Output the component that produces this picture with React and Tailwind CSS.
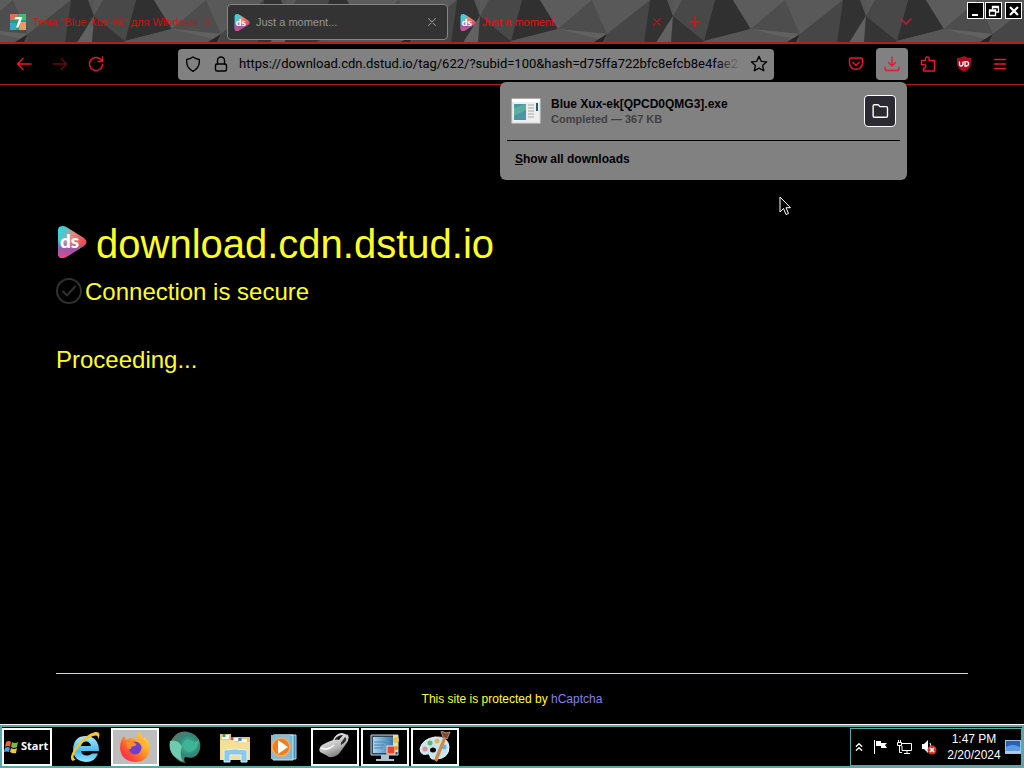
import React from "react";

function Facets() {
  return (
    <svg className="absolute inset-0 h-full w-full" aria-hidden="true">
      <defs>
        <pattern id="facets" x="94" y="0" width="193" height="43" patternUnits="userSpaceOnUse">
          <rect width="193" height="43" fill="#505050" />
          <path d="M0 0H9L0 16Z" fill="#595959" />
          <path d="M9 0H42L31 41L0 16Z" fill="#484848" />
          <path d="M42 0H60L78 29L31 41Z" fill="#303030" />
          <path d="M0 16L31 41L30 43H0Z" fill="#353535" />
          <path d="M60 0H112L78 29Z" fill="#5c5c5c" />
          <path d="M78 29L112 0L127 34Z" fill="#4d4d4d" />
          <path d="M112 0H170L127 34Z" fill="#595959" />
          <path d="M127 34L170 0L165 43H125Z" fill="#464646" />
          <path d="M170 0H188L193 16L176 43H164Z" fill="#323232" />
          <path d="M187 0H193V16Z" fill="#555" />
          <path d="M193 16L191 43H176Z" fill="#616161" />
          <path d="M193 16V43H191Z" fill="#353535" />
          <path d="M31 41L78 29L127 34L114 43H30Z" fill="#565656" />
          <path d="M78 29L127 34L120 39Z" fill="#616161" />
          <path d="M127 34L114 42H123Z" fill="#262626" />
        </pattern>
      </defs>
      <rect width="100%" height="100%" fill="url(#facets)" />
    </svg>
  );
}

function DsLogo({ className, id }) {
  const shape = "M1 4Q1 0 6 0Q8 0 11 2L27 12Q32 16 27 20L9 31Q1 34 1 27Z";
  return (
    <svg viewBox="0 0 30 32" className={className} aria-hidden="true">
      <defs>
        <linearGradient id={id} x1="0" y1="0" x2="0.9" y2="0.5">
          <stop offset="0" stopColor="#1fe0e6" />
          <stop offset="0.3" stopColor="#58c4cc" />
          <stop offset="0.55" stopColor="#e58a80" />
          <stop offset="1" stopColor="#ea5058" />
        </linearGradient>
        <linearGradient id={id + "b"} x1="0.3" y1="0" x2="0.2" y2="1">
          <stop offset="0.45" stopColor="#7a58c0" stopOpacity="0" />
          <stop offset="0.72" stopColor="#8c50b4" stopOpacity="0.85" />
          <stop offset="1" stopColor="#f0468c" />
        </linearGradient>
      </defs>
      <path d={shape} fill={`url(#${id})`} />
      <path d={shape} fill={`url(#${id}b)`} />
      <text x="3" y="22" fontFamily="Lato, sans-serif" fontWeight="900" fontSize="19" fill="#fff">ds</text>
    </svg>
  );
}

function Line({ children, className, w = 1.4, box = 16 }) {
  return (
    <svg viewBox={`0 0 ${box} ${box}`} className={className} fill="none" stroke="currentColor" strokeWidth={w} strokeLinecap="round" strokeLinejoin="round" aria-hidden="true">
      {children}
    </svg>
  );
}

function Close({ className }) {
  return <Line className={className} w={1.2}><path d="M4 4L12 12M12 4L4 12" /></Line>;
}

function WindowButton({ label, children }) {
  return (
    <button aria-label={label} className="flex h-[17px] w-[17px] items-center justify-center border border-white bg-black text-white">
      <svg viewBox="0 0 14 14" className="h-3.5 w-3.5 shrink-0" fill="none" stroke="currentColor" strokeWidth="1.6" aria-hidden="true">{children}</svg>
    </button>
  );
}

function TabStrip() {
  return (
    <header className="relative flex h-11 border-b-2 border-[#a82424] bg-[#525252]">
      <Facets />
      <div className="relative flex min-w-0 flex-1 pt-1 text-[11px] text-[#e01010]">
        <div className="flex h-9 w-56 items-center pl-2.5">
          <svg viewBox="0 0 16 16" className="h-4 w-4 shrink-0" aria-hidden="true">
            <rect width="16" height="16" rx="1" fill="#279e84" />
            <path d="M0 0H8V6H0Z" fill="#e36b50" /><path d="M0 9H6V16H0Z" fill="#38a9c4" /><path d="M10 8H16V16H9Z" fill="#e99a68" /><path d="M9 0H16V6H9Z" fill="#45b978" />
            <path d="M5 3H12L11.700 5L8.500 13.500H6L9 5.300H4.600Z" fill="#fff" />
          </svg>
          <button className="ml-1.5 w-[168px] whitespace-nowrap bg-linear-to-r from-[#e01010] from-80% to-[#b01010]/50 bg-clip-text text-left text-transparent">Тема "Blue Xux-ek" для Windows</button>
          <button aria-label="Close tab"><Close className="h-3.5 w-3.5 opacity-60" /></button>
        </div>
        <div className="ml-[3px] flex h-9 w-[221px] items-center rounded-sm border border-[#858585] bg-[#333] px-1.5 text-[#969696]">
          <DsLogo id="ds1" className="h-[17px] w-4 shrink-0" />
          <button className="ml-1.5 flex-1 text-left">Just a moment...</button>
          <button aria-label="Close tab" className="mr-0.5"><Close className="h-3.5 w-3.5" /></button>
        </div>
        <div className="flex h-9 w-56 items-center pl-3 pr-2">
          <DsLogo id="ds2" className="h-[17px] w-4 shrink-0" />
          <button className="ml-1.5 flex-1 text-left">Just a moment</button>
          <button aria-label="Close tab"><Close className="h-3.5 w-3.5" /></button>
        </div>
        <button aria-label="New tab" className="ml-[15px] h-9"><Line className="h-4 w-4" w={1.5}><path d="M8 3V13M3 8H13" /></Line></button>
      </div>
      <button aria-label="List all tabs" className="relative mr-[53px] text-[#d8142c]"><Line className="h-4 w-4"><path d="M3 6L8 11L13 6" /></Line></button>
      <div className="relative flex pt-0.5 pr-0.5">
        <WindowButton label="Minimize"><path d="M3 11H9" strokeWidth="2" /></WindowButton>
        <div className="ml-px"><WindowButton label="Restore"><path d="M5.500 5.500V2.500H11.500V8H9M5.500 3.500H11.500" strokeWidth="1.300" /><path d="M2.500 6H8.500V11.500H2.500ZM2.500 7H8.500" strokeWidth="1.300" /></WindowButton></div>
        <div className="ml-[3px]"><WindowButton label="Close"><path d="M3 3L11 11M11 3L3 11" strokeWidth="2.200" /></WindowButton></div>
      </div>
    </header>
  );
}

function DownloadsPanel() {
  return (
    <section aria-label="Downloads" className="absolute right-0 top-full z-10 mr-px mt-0.5 w-[407px] rounded-md bg-[#818181] px-[7px] font-bold text-black">
      <div className="flex h-[59px] items-center border-b border-black px-1">
        <svg viewBox="0 0 30 26" className="h-[26px] w-[30px]" aria-hidden="true">
          <rect x="1" y="1" width="28" height="24" fill="#eee" stroke="#d8d8d8" />
          <path d="M1 1H29V4H1Z" fill="#fff" />
          <rect x="3" y="6" width="12" height="16" fill="#4b96a6" />
          <path d="M3 10L15 6V12L3 18Z" fill="#5cae9e" />
          <path d="M17 7H23M17 10H23M17 13H23M17 16H23M17 19H23" stroke="#aaa" />
          <path d="M26 5V13" stroke="#285d61" strokeWidth="2" />
        </svg>
        <div className="ml-2.5 flex-1 text-xs">
          <p className="leading-4">Blue Xux-ek[QPCD0QMG3].exe</p>
          <p className="text-[11px] leading-3.5 text-[#404040]">Completed — 367 KB</p>
        </div>
        <button aria-label="Show in folder" className="flex h-8 w-8 items-center justify-center rounded-sm border border-white bg-[#2b2a33] text-white">
          <Line className="h-5 w-5" w={1.1}><path d="M2.500 4Q2.500 3 3.500 3H6.500L8 4.500H13Q14 4.500 14 5.500V12Q14 13 13 13H3.500Q2.500 13 2.500 12Z" /></Line>
        </button>
      </div>
      <button className="mb-[3px] flex h-9 w-full items-center pl-2 text-xs"><span className="underline">S</span>how all downloads</button>
    </section>
  );
}

function Toolbar() {
  return (
    <nav className="flex h-[41px] items-center border-b border-[#b81722] bg-black text-[#f0142f]">
      <button aria-label="Back" className="ml-4"><Line className="h-4 w-4"><path d="M15 8H1.500M7 2.500L1.500 8L7 13.500" /></Line></button>
      <button aria-label="Forward" disabled className="ml-5 text-[#650b16]"><Line className="h-4 w-4"><path d="M1 8H14.500M9 2.500L14.500 8L9 13.500" /></Line></button>
      <button aria-label="Reload" className="ml-5"><Line className="h-4 w-4"><path d="M13.300 4.200A6.500 6.500 0 1 0 14.500 8.500M14.500 1V5.500H10" /></Line></button>
      <div className="ml-[74px] flex h-[31px] min-w-0 flex-1 items-center rounded-sm bg-[#818181] px-[7px] text-black">
        <Line className="h-4 w-4 shrink-0"><path d="M8 1Q11 3 14.300 3.500V6.500Q14 12 8 15.300Q2 12 1.700 6.500V3.500Q5 3 8 1Z" /></Line>
        <Line className="ml-3 h-4 w-4 shrink-0"><rect x="2.500" y="8" width="11" height="7" rx="1.500" /><path d="M4.500 8V4.500A3.500 3.500 0 0 1 11.500 4.500V8" /></Line>
        <div className="relative ml-2.5 min-w-0 flex-1">
          <input aria-label="Address" className="block w-full bg-transparent font-[Roboto,sans-serif] text-[13px] outline-none" defaultValue="https://download.cdn.dstud.io/tag/622/?subid=100&hash=d75ffa722bfc8efcb8e4fae2c4" />
          <span className="pointer-events-none absolute inset-y-0 right-0 w-6 bg-linear-to-r from-transparent to-[#818181]" />
        </div>
        <button aria-label="Bookmark" className="ml-2.5 -mr-px"><Line className="h-[18px] w-[18px]" w={1.2}><path d="M8 1.200L10 5.600L14.800 6.100L11.200 9.300L12.200 14L8 11.600L3.800 14L4.800 9.300L1.200 6.100L6 5.600Z" /></Line></button>
      </div>
      <button aria-label="Save to Pocket" className="ml-[74px]"><Line className="h-4 w-4"><path d="M3 2H13Q14.500 2 14.500 3.500V7A6.500 6.500 0 0 1 1.500 7V3.500Q1.500 2 3 2ZM4.800 6.200L8 9.200L11.200 6.200" /></Line></button>
      <div className="relative ml-3">
        <button aria-label="Downloads" className="flex h-8 w-8 items-center justify-center rounded-sm bg-[#818181]"><Line className="h-4 w-4"><path d="M8 1V10M4.500 6.500L8 10L11.500 6.500M1 11V12.500Q1 14.500 3 14.500H13Q15 14.500 15 12.500V11" /></Line></button>
        <DownloadsPanel />
      </div>
      <button aria-label="Extensions" className="ml-3"><Line className="h-4 w-4"><path d="M1.500 7V4.500H5.500V2.800A1.800 1.800 0 0 1 9.100 2.800V4.500H14.500V15H3.500V12.300H4.200A1.700 1.700 0 0 0 4.200 8.800H1.500V7" /></Line></button>
      <button aria-label="uBlock" className="ml-5">
        <svg viewBox="0 0 16 16" className="h-4 w-4" aria-hidden="true"><path d="M8 0Q11 2 15 2V7Q15 13 8 16Q1 13 1 7V2Q5 2 8 0Z" fill="#a80d20" /><path d="M3.500 5.500V8.500Q3.500 10 5 10T7 8.500V5.500M9 5.700H10.500Q12.500 5.700 12.500 7.800T10.500 10H9Z" fill="none" stroke="#fff" strokeWidth="1.300" /></svg>
      </button>
      <button aria-label="Menu" className="ml-5 mr-4"><Line className="h-4 w-4" w={1.3}><path d="M2.500 3.500H13.500M2.500 8H13.500M2.500 12.500H13.500" /></Line></button>
    </nav>
  );
}

function Pointer() {
  return (
    <svg viewBox="0 0 12 20" className="absolute left-[779px] top-[111px] h-5 w-3" aria-hidden="true">
      <path d="M1 1V16L4.500 12.500L7 18.500L9.500 17.500L7 11.700H11.500Z" fill="#000" stroke="#fff" />
    </svg>
  );
}

function Page() {
  return (
    <main className="relative flex flex-1 flex-col px-14 text-[#ffff28]">
      <Pointer />
      <div className="mt-[135px] flex items-center">
        <DsLogo id="ds3" className="-mt-1 h-8 w-8" />
        <h1 className="ml-2 text-[40px] leading-12">download.cdn.dstud.io</h1>
      </div>
      <div className="mt-2 flex items-center">
        <Line className="-mt-0.5 h-[26px] w-[26px] text-[#303030]" w={2} box={26}><circle cx="13" cy="13" r="12" /><path d="M7 13.500L11 17.500L19 8.500" /></Line>
        <h2 className="ml-[3px] text-2xl leading-8">Connection is secure</h2>
      </div>
      <p className="mt-9 text-2xl leading-8">Proceeding...</p>
      <footer className="mt-auto border-t border-[#e8e85a] pt-4 pb-[17px] text-center text-xs leading-[18px]">
        This site is protected by <a href="#" className="text-[#8080f0]">hCaptcha</a>
      </footer>
    </main>
  );
}

function IeIcon() {
  return (
    <svg viewBox="0 0 32 32" className="h-8 w-8" aria-hidden="true">
      <defs><linearGradient id="ie" x2="0" y2="1"><stop stopColor="#a9eaff" /><stop offset="0.600" stopColor="#45b8ee" /><stop offset="1" stopColor="#99e5ff" /></linearGradient></defs>
      <path d="M30 20H12Q13 24.500 18 24.500Q21 24.500 23 22.500H29Q26 31 17 31Q4 30 4 18Q5 5 17 5Q30 6 30 20ZM12 15H22Q21 10.500 17 10.500Q13 10.500 12 15Z" fill="url(#ie)" />
      <path d="M4 30Q-1 28 6 17Q15 4 26 1Q33 0 29 9Q30 3 24 5Q14 9 7 20Q2 28 7 28Z" fill="#f4c62f" />
    </svg>
  );
}

function FirefoxIcon() {
  return (
    <svg viewBox="0 0 32 32" className="h-8 w-8" aria-hidden="true">
      <defs><linearGradient id="ff" x1="1" x2="0" y2="1"><stop stopColor="#fff14a" /><stop offset="0.450" stopColor="#ff9428" /><stop offset="0.750" stopColor="#ff4538" /><stop offset="1" stopColor="#e52270" /></linearGradient></defs>
      <path d="M20 1Q24 5 24 8L26 6Q31 12 31 18Q29 31 16 31Q2 30 1 17Q1 9 5 5L7 9Q10 7 13 7Q16 7 18 9Q17 4 20 1Z" fill="url(#ff)" />
      <circle cx="16" cy="17" r="6.500" fill="#7040cc" />
      <path d="M7 12Q12 9 16 12Q19 14 15 15Q11 16 12 18Q8 19 7 12Z" fill="#ff8b2c" />
      <path d="M18 10Q25 12 24 20Q29 15 24 8Z" fill="#ffb035" />
    </svg>
  );
}

function OrbIcon() {
  return (
    <svg viewBox="0 0 32 32" className="h-8 w-8" aria-hidden="true">
      <defs><radialGradient id="orb" cx="0.600" cy="0.450"><stop stopColor="#43c09d" /><stop offset="0.650" stopColor="#318878" /><stop offset="1" stopColor="#58776f" /></radialGradient></defs>
      <path d="M9 2Q17-2 26 4Q34 11 30 21Q26 29 16 26Q14 30 17 32Q9 31 6 26Q3 24 2 20Q-2 10 9 2Z" fill="url(#orb)" />
      <path d="M1 10Q9 8 13 16Q10 23 14 31L6 26Q-1 20 1 10Z" fill="#6dcbb0" /><path d="M13 14Q17 7 20 9Q28 13 30 8Q30 19 21 21Q16 21 13 14Z" fill="#3eb496" />
    </svg>
  );
}

function FolderIcon() {
  return (
    <svg viewBox="0 0 32 32" className="h-8 w-8" aria-hidden="true">
      <path d="M1 3H12V6H31V29H1Z" fill="#e4c66e" /><path d="M3 4H10V8H3ZM11 7H19V10H11ZM20 8H28V11H20Z" fill="#fff" />
      <path d="M5 3V6" stroke="#35a653" strokeWidth="3" /><path d="M13 6V9" stroke="#df4838" strokeWidth="3" /><path d="M21 7V10" stroke="#397fd1" strokeWidth="3" />
      <path d="M1 9H15L17 11H31V29H1Z" fill="#f4df96" />
      <path d="M5 19Q16 17 28 19V31H22V24H11V31H5Z" fill="#8fc9ea" stroke="#d9f3ff" />
    </svg>
  );
}

function PlayerIcon() {
  return (
    <svg viewBox="0 0 32 32" className="h-8 w-8" aria-hidden="true">
      <path d="M6 4H27V28H6Z" fill="#438db8" stroke="#a9dbef" /><path d="M4 4H24V29H4Z" fill="#76b7d6" stroke="#c5ebf8" /><path d="M2 4H21V28H2Z" fill="#8abbd5" />
      <circle cx="12" cy="16" r="9" fill="#ef7e1e" stroke="#ffad52" strokeWidth="1.500" /><path d="M9 9L19 16L9 23Z" fill="#fff" />
    </svg>
  );
}

function MouseIcon() {
  return (
    <svg viewBox="0 0 32 32" className="h-8 w-8" aria-hidden="true">
      <defs><linearGradient id="mouse" x1="0.200" x2="0.700" y2="1"><stop stopColor="#f4f4f4" /><stop offset="0.600" stopColor="#bcbcbc" /><stop offset="1" stopColor="#6a6a6a" /></linearGradient></defs>
      <path d="M14 9Q17 2 23 2L29 4Q31 8 27 13L22 20Q18 27 10 26Q7 24 1 21Q-1 17 3 14Q8 11 14 9Z" fill="url(#mouse)" />
      <path d="M16 8Q19 4 24 4L20 9Q18 8 16 9Z" fill="#1c1c1c" />
      <path d="M26 6Q29 8 25 12L22 14Q21 12 24 9Z" fill="#303030" />
      <path d="M2 17Q8 20 15 14" stroke="#fff" fill="none" strokeWidth="1.500" />
    </svg>
  );
}

function MonitorIcon() {
  return (
    <svg viewBox="0 0 32 32" className="h-8 w-8" aria-hidden="true">
      <defs><linearGradient id="screen"><stop stopColor="#a9d5f0" /><stop offset="1" stopColor="#286ba4" /></linearGradient></defs>
      <path d="M2 4H29V24H2Z" fill="#344453" stroke="#bdd7e5" /><path d="M4 6H27V22H4Z" fill="url(#screen)" /><path d="M12 24H20V28H25V30H7V28H12Z" fill="#a9c3d1" />
      <path d="M5 11H17M5 14H15M5 17H14" stroke="#4a86ad" /><path d="M24 4H29V21H24Z" fill="#f2dc91" /><circle cx="27" cy="9" r="3" fill="#e9c34a" /><rect x="18" y="15" width="8" height="8" fill="#e64531" stroke="#ffe2d0" /><circle cx="27" cy="17" r="2" fill="#ed8c38" />
    </svg>
  );
}

function PaintIcon() {
  return (
    <svg viewBox="0 0 32 32" className="h-8 w-8" aria-hidden="true">
      <path d="M1 18Q3 8 16 6Q29 5 30 16Q30 27 18 28Q11 29 11 25Q11 22 8 23Q2 25 1 18Z" fill="#c8e4ef" stroke="#eefaff" /><ellipse cx="14" cy="19" rx="3" ry="2.500" fill="#000" />
      <circle cx="6" cy="18" r="2.500" fill="#e58a90" /><circle cx="11" cy="12" r="2.500" fill="#62b862" /><circle cx="18" cy="10" r="2.500" fill="#e8b060" /><circle cx="25" cy="16" r="2.500" fill="#68b4e0" />
      <path d="M24 7L27 8L18 31L15 29Z" fill="#d18a43" /><path d="M24 6L22 0L27 2L31 1L28 8Z" fill="#7c4936" stroke="#c08467" />
    </svg>
  );
}

function Task({ label, children, open, active }) {
  const look = active ? "border-2 border-white bg-[#bdbdbd]" : open ? "border-2 border-white bg-black" : "border-2 border-transparent";
  return <button aria-label={label} className={`flex h-[38px] w-12 items-center justify-center ${look}`}>{children}</button>;
}

function Taskbar() {
  return (
    <footer className="flex h-[43px] items-center border-2 border-[#58aaa9] bg-black text-white shadow-[0_-1px_0_#fff]">
      <button className="flex h-[38px] w-[50px] items-center justify-start border-2 border-white text-[11px] font-bold">
        <svg viewBox="0 0 16 16" className="mr-px h-4 w-4 shrink-0" aria-hidden="true"><path d="M2 3Q5 1 7 3L6 8Q4 6 1 8Z" fill="#ec6337" /><path d="M8 3Q11 5 14 3L13 8Q10 10 7 8Z" fill="#79bb40" /><path d="M1 9Q4 7 6 9L5 13Q3 12 0 13Z" fill="#4b9ce0" /><path d="M7 9Q10 11 13 9L12 14Q9 15 6 13Z" fill="#f4c43d" /></svg>
        <span className="font-[Open_Sans,sans-serif]">Start</span>
      </button>
      <div className="ml-[9px] flex gap-0.5">
        <Task label="Internet Explorer"><IeIcon /></Task>
        <Task label="Firefox" active><FirefoxIcon /></Task>
        <Task label="Network sphere"><OrbIcon /></Task>
        <Task label="File Explorer"><FolderIcon /></Task>
        <Task label="Media Player"><PlayerIcon /></Task>
        <Task label="Mouse" open><MouseIcon /></Task>
        <Task label="Personalization" open><MonitorIcon /></Task>
        <Task label="Paint" open><PaintIcon /></Task>
      </div>
      <div className="ml-auto flex h-[38px] items-center border border-[#58aaa9] pl-1 text-xs">
        <button aria-label="Show hidden icons"><Line className="h-3 w-2" w={2} box={12}><path d="M2 5L6 1L10 5M2 11L6 7L10 11" /></Line></button>
        <svg viewBox="0 0 16 16" className="ml-2.5 h-4 w-4" aria-hidden="true"><path d="M1 1H2V15H1ZM3 2H8V4H14L12 6L14 9H8V7H3Z" fill="#fff" /></svg>
        <svg viewBox="0 0 16 16" className="ml-2 h-4 w-4" fill="none" stroke="#fff" aria-hidden="true"><path d="M5 4.500H14.500V11.500H5V7M7 14.500H13M10 12V14M2.500 7V13.500H5M.5 3.500H4.500V6.500H.5ZM1.500 3V1M3.500 3V1" /></svg>
        <svg viewBox="0 0 16 16" className="ml-2 h-4 w-4" aria-hidden="true"><path d="M1 5H3L7 1V14L3 10H1Z" fill="#fff" /><path d="M9 4Q11 7 9 10" stroke="#fff" fill="none" /><circle cx="11" cy="11" r="4.500" fill="#d5362d" /><path d="M9 9L13 13M13 9L9 13" stroke="#fff" strokeWidth="1.500" /></svg>
        <time className="ml-2.5 w-[54px] text-center leading-4 whitespace-nowrap">1:47 PM<br />2/20/2024</time>
        <svg viewBox="0 0 16 14" className="ml-1 h-3.5 w-4" aria-hidden="true"><rect x=".5" y=".5" width="15" height="13" fill="#2860b8" stroke="#9fc3e5" /><path d="M1 7Q7 3 15 7V11H1Z" fill="#5c9be2" /><path d="M1 11H15V13H1Z" fill="#b3cce3" /></svg>
      </div>
    </footer>
  );
}

export default function App() {
  return (
    <div className="flex min-h-screen flex-col bg-black font-['Liberation_Sans',Arial,sans-serif]">
      <TabStrip />
      <Toolbar />
      <Page />
      <Taskbar />
    </div>
  );
}
